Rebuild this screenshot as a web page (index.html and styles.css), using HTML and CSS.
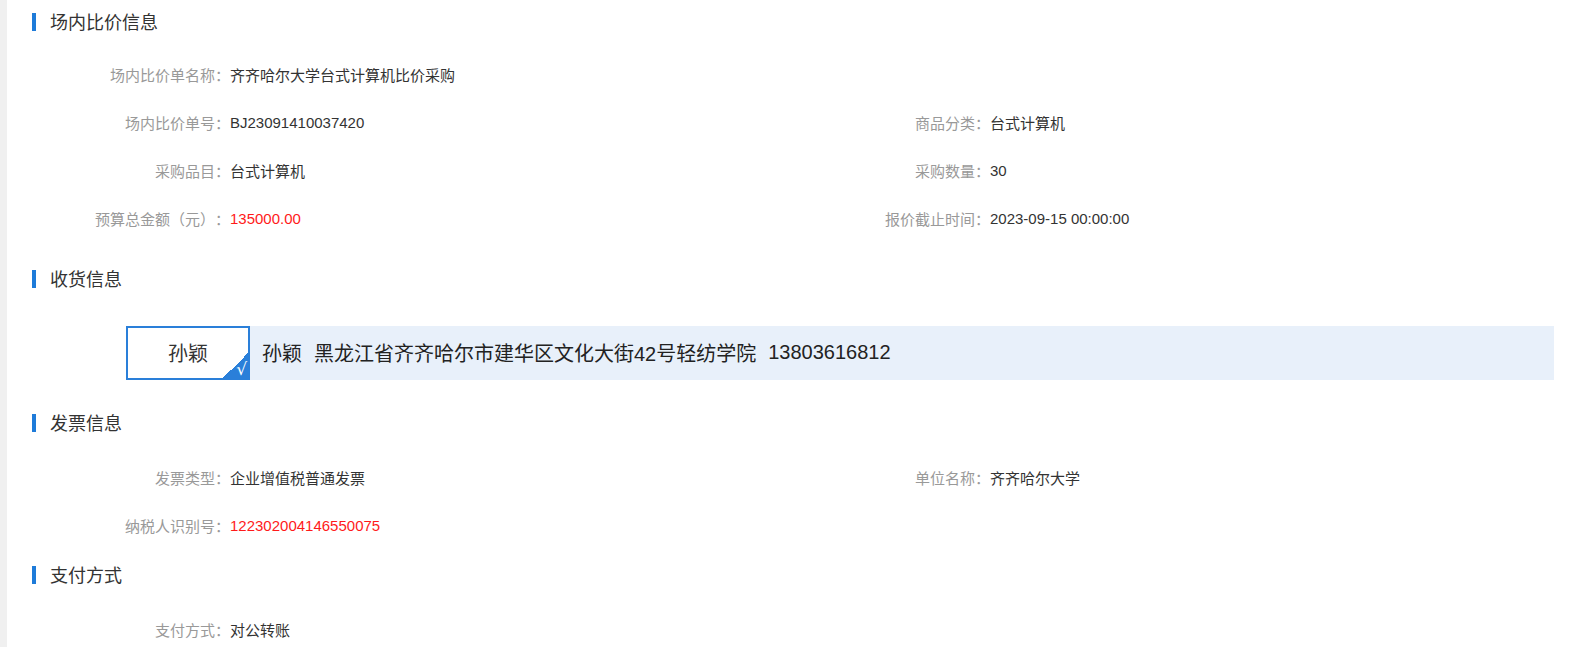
FILE: index.html
```html
<!DOCTYPE html>
<html lang="zh-CN">
<head>
<meta charset="utf-8">
<title>场内比价信息</title>
<link rel="stylesheet" href="styles.css">
</head>
<body>
<div class="page">
  <div class="strip"></div>
  <main class="main">
    <section class="section sec-basic">
      <h2 class="section-title">场内比价信息</h2>
      <div class="fields">
        <div class="field field-full"><span class="label">场内比价单名称：</span><span class="value">齐齐哈尔大学台式计算机比价采购</span></div>
        <div class="field"><span class="label">场内比价单号：</span><span class="value">BJ23091410037420</span></div>
        <div class="field"><span class="label">商品分类：</span><span class="value">台式计算机</span></div>
        <div class="field"><span class="label">采购品目：</span><span class="value">台式计算机</span></div>
        <div class="field"><span class="label">采购数量：</span><span class="value">30</span></div>
        <div class="field"><span class="label">预算总金额（元）：</span><span class="value value-red">135000.00</span></div>
        <div class="field"><span class="label">报价截止时间：</span><span class="value">2023-09-15 00:00:00</span></div>
      </div>
    </section>

    <section class="section sec-delivery">
      <h2 class="section-title">收货信息</h2>
      <div class="address">
        <div class="address-name">孙颖<span class="check">√</span></div>
        <div class="address-info"><span class="addr-part">孙颖</span><span class="addr-part">黑龙江省齐齐哈尔市建华区文化大街42号轻纺学院</span><span>13803616812</span></div>
      </div>
    </section>

    <section class="section sec-invoice">
      <h2 class="section-title">发票信息</h2>
      <div class="fields">
        <div class="field"><span class="label">发票类型：</span><span class="value">企业增值税普通发票</span></div>
        <div class="field"><span class="label">单位名称：</span><span class="value">齐齐哈尔大学</span></div>
        <div class="field"><span class="label">纳税人识别号：</span><span class="value value-red">122302004146550075</span></div>
      </div>
    </section>

    <section class="section sec-pay">
      <h2 class="section-title">支付方式</h2>
      <div class="fields">
        <div class="field"><span class="label">支付方式：</span><span class="value">对公转账</span></div>
      </div>
    </section>
  </main>
</div>
</body>
</html>
```

FILE: styles.css
```css
* { box-sizing: border-box; }
html, body { margin: 0; padding: 0; background: #fff; }
body {
  font-family: "Liberation Sans", "Noto Sans CJK SC", sans-serif;
  color: #333;
  font-size: 15px;
  text-spacing-trim: space-all;
}
.page {
  display: flex;
  min-height: 647px;
}
.strip {
  width: 7px;
  flex: 0 0 7px;
  background: #f0f0f0;
}
.main {
  flex: 1;
  padding-top: 2px;
  overflow: hidden;
}
.section-title {
  margin: 0 0 0 25px;
  height: 40px;
  display: flex;
  align-items: center;
  font-size: 18px;
  font-weight: normal;
  color: #333;
  padding-bottom: 2px;
}
.section-title::before {
  content: "";
  width: 4px;
  height: 18px;
  background: #1e7bd9;
  margin-right: 14px;
  margin-top: 1px;
}
.fields {
  display: grid;
  grid-template-columns: 760px 1fr;
  margin-left: 17px;
  margin-top: 9px;
}
.field {
  display: flex;
  align-items: center;
  height: 48px;
  padding-bottom: 2px;
}
.field-full { grid-column: 1 / -1; }
.label {
  width: 206px;
  flex: 0 0 206px;
  text-align: right;
  color: #999;
  font-size: 15px;
  white-space: nowrap;
  text-spacing-trim: space-all;
}
.value {
  color: #333;
  font-size: 15px;
}
.value-red { color: #ff1a1a; }

.sec-delivery { margin-top: 16px; }
.sec-invoice { margin-top: 23px; }
.sec-invoice .fields { margin-top: 11px; }
.sec-pay { margin-top: 5px; }
.sec-pay .fields { margin-top: 11px; }

.address {
  display: flex;
  margin: 27px 15px 0 119px;
  height: 54px;
}
.address-name {
  position: relative;
  width: 124px;
  flex: 0 0 124px;
  border: 2px solid #2a7fd9;
  background: #fff;
  display: flex;
  align-items: center;
  justify-content: center;
  font-size: 20px;
  color: #333;
  overflow: hidden;
  padding-bottom: 2px;
}
.check {
  position: absolute;
  right: 0;
  bottom: 0;
  width: 25px;
  height: 25px;
  background: linear-gradient(to bottom right, transparent 50%, #2a7fd9 50%);
  color: #fff;
  font-size: 17px;
  line-height: 1;
  display: flex;
  align-items: flex-end;
  justify-content: flex-end;
  padding: 0 1px 0 0;
  font-family: "DejaVu Sans", sans-serif;
}
.address-info {
  flex: 1;
  background: #e8f0fa;
  display: flex;
  align-items: center;
  padding-left: 12px;
  padding-bottom: 2px;
  font-size: 20px;
  color: #222;
}
.addr-part { margin-right: 12px; }
```
